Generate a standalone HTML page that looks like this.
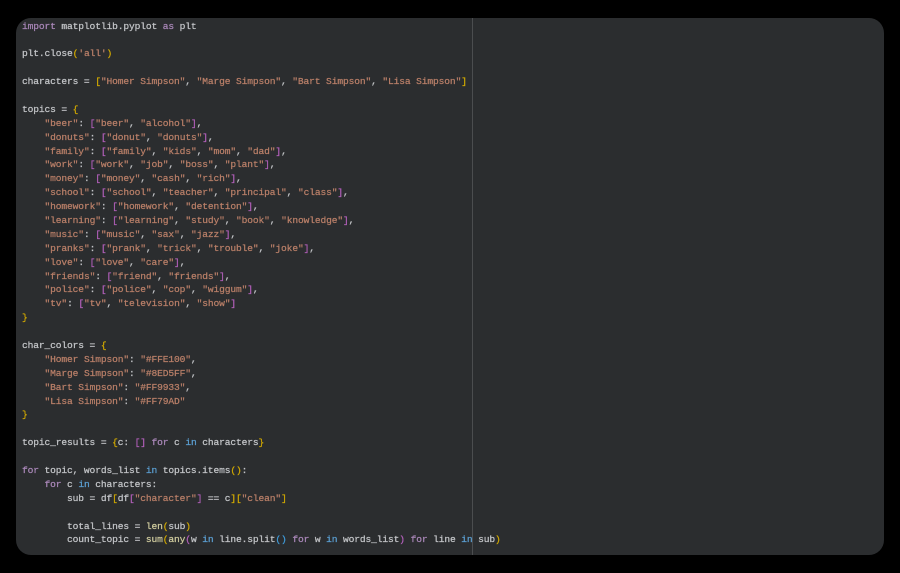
<!DOCTYPE html>
<html>
<head>
<meta charset="utf-8">
<style>
html,body{margin:0;padding:0;width:900px;height:573px;background:#000;overflow:hidden}
#panel{position:absolute;left:16px;top:18px;width:868px;height:537px;background:#2b2d2f;border-radius:15px;overflow:hidden}
#rule{position:absolute;left:456px;top:0;width:1px;height:537px;background:#4b4d4f}
pre{position:absolute;left:6px;top:1.5px;margin:0;font-family:"Liberation Mono",monospace;font-size:9.6px;letter-spacing:-.127px;line-height:13.892px;color:#c3c5c8;font-weight:400;filter:blur(.35px);-webkit-text-stroke:.25px currentColor}
.k{color:#a987b8}.b{color:#5b9fd2}.s{color:#b97f68}.y{color:#d0a800}.p{color:#b05fb8}.l{color:#3f9ad8}.f{color:#cfcb9e}
</style>
</head>
<body>
<div id="panel">
<div id="rule"></div>
<pre><span class="k">import</span> matplotlib.pyplot <span class="k">as</span> plt

plt.close<span class="y">(</span><span class="s">'all'</span><span class="y">)</span>

characters = <span class="y">[</span><span class="s">"Homer Simpson"</span>, <span class="s">"Marge Simpson"</span>, <span class="s">"Bart Simpson"</span>, <span class="s">"Lisa Simpson"</span><span class="y">]</span>

topics = <span class="y">{</span>
    <span class="s">"beer"</span>: <span class="p">[</span><span class="s">"beer"</span>, <span class="s">"alcohol"</span><span class="p">]</span>,
    <span class="s">"donuts"</span>: <span class="p">[</span><span class="s">"donut"</span>, <span class="s">"donuts"</span><span class="p">]</span>,
    <span class="s">"family"</span>: <span class="p">[</span><span class="s">"family"</span>, <span class="s">"kids"</span>, <span class="s">"mom"</span>, <span class="s">"dad"</span><span class="p">]</span>,
    <span class="s">"work"</span>: <span class="p">[</span><span class="s">"work"</span>, <span class="s">"job"</span>, <span class="s">"boss"</span>, <span class="s">"plant"</span><span class="p">]</span>,
    <span class="s">"money"</span>: <span class="p">[</span><span class="s">"money"</span>, <span class="s">"cash"</span>, <span class="s">"rich"</span><span class="p">]</span>,
    <span class="s">"school"</span>: <span class="p">[</span><span class="s">"school"</span>, <span class="s">"teacher"</span>, <span class="s">"principal"</span>, <span class="s">"class"</span><span class="p">]</span>,
    <span class="s">"homework"</span>: <span class="p">[</span><span class="s">"homework"</span>, <span class="s">"detention"</span><span class="p">]</span>,
    <span class="s">"learning"</span>: <span class="p">[</span><span class="s">"learning"</span>, <span class="s">"study"</span>, <span class="s">"book"</span>, <span class="s">"knowledge"</span><span class="p">]</span>,
    <span class="s">"music"</span>: <span class="p">[</span><span class="s">"music"</span>, <span class="s">"sax"</span>, <span class="s">"jazz"</span><span class="p">]</span>,
    <span class="s">"pranks"</span>: <span class="p">[</span><span class="s">"prank"</span>, <span class="s">"trick"</span>, <span class="s">"trouble"</span>, <span class="s">"joke"</span><span class="p">]</span>,
    <span class="s">"love"</span>: <span class="p">[</span><span class="s">"love"</span>, <span class="s">"care"</span><span class="p">]</span>,
    <span class="s">"friends"</span>: <span class="p">[</span><span class="s">"friend"</span>, <span class="s">"friends"</span><span class="p">]</span>,
    <span class="s">"police"</span>: <span class="p">[</span><span class="s">"police"</span>, <span class="s">"cop"</span>, <span class="s">"wiggum"</span><span class="p">]</span>,
    <span class="s">"tv"</span>: <span class="p">[</span><span class="s">"tv"</span>, <span class="s">"television"</span>, <span class="s">"show"</span><span class="p">]</span>
<span class="y">}</span>

char_colors = <span class="y">{</span>
    <span class="s">"Homer Simpson"</span>: <span class="s">"#FFE100"</span>,
    <span class="s">"Marge Simpson"</span>: <span class="s">"#8ED5FF"</span>,
    <span class="s">"Bart Simpson"</span>: <span class="s">"#FF9933"</span>,
    <span class="s">"Lisa Simpson"</span>: <span class="s">"#FF79AD"</span>
<span class="y">}</span>

topic_results = <span class="y">{</span>c: <span class="p">[]</span> <span class="k">for</span> c <span class="b">in</span> characters<span class="y">}</span>

<span class="k">for</span> topic, words_list <span class="b">in</span> topics.items<span class="y">()</span>:
    <span class="k">for</span> c <span class="b">in</span> characters:
        sub = df<span class="y">[</span>df<span class="p">[</span><span class="s">"character"</span><span class="p">]</span> == c<span class="y">][</span><span class="s">"clean"</span><span class="y">]</span>

        total_lines = <span class="f">len</span><span class="y">(</span>sub<span class="y">)</span>
        count_topic = <span class="f">sum</span><span class="y">(</span><span class="f">any</span><span class="p">(</span>w <span class="b">in</span> line.split<span class="l">()</span> <span class="k">for</span> w <span class="b">in</span> words_list<span class="p">)</span> <span class="k">for</span> line <span class="b">in</span> sub<span class="y">)</span></pre>
</div>
</body>
</html>
